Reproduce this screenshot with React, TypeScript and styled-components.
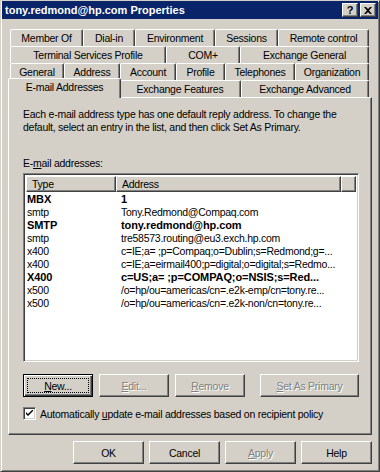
import styled, { createGlobalStyle, css } from 'styled-components';

const FACE = '#d4d0c8';
const LIGHT = '#ffffff';
const SHADOW = '#808080';
const DARK = '#404040';
const CAPTION = '#0a246a';
const FONT = `"Liberation Sans", Tahoma, Arial, sans-serif`;

const TAB_ROWS: [string, number][][] = [
  [['Member Of', 73], ['Dial-in', 52], ['Environment', 80], ['Sessions', 63], ['Remote control', 91]],
  [['Terminal Services Profile', 156], ['COM+', 74], ['Exchange General', 129]],
  [['General', 54], ['Address', 56], ['Account', 56], ['Profile', 49], ['Telephones', 70], ['Organization', 74]],
  [['E-mail Addresses', 109], ['Exchange Features', 122], ['Exchange Advanced', 128]],
];

const ADDRESSES = [
  { type: 'MBX', address: '1', primary: true },
  { type: 'smtp', address: 'Tony.Redmond@Compaq.com' },
  { type: 'SMTP', address: 'tony.redmond@hp.com', primary: true },
  { type: 'smtp', address: 'tre58573.routing@eu3.exch.hp.com' },
  { type: 'x400', address: 'c=IE;a= ;p=Compaq;o=Dublin;s=Redmond;g=...' },
  { type: 'x400', address: 'c=IE;a=eirmail400;p=digital;o=digital;s=Redmo...' },
  { type: 'X400', address: 'c=US;a= ;p=COMPAQ;o=NSIS;s=Red...', primary: true },
  { type: 'x500', address: '/o=hp/ou=americas/cn=.e2k-emp/cn=tony.re...' },
  { type: 'x500', address: '/o=hp/ou=americas/cn=.e2k-non/cn=tony.re...' },
];

const ACTIVE_TAB = 'E-mail Addresses';

export default function App() {
  return (
    <>
      <GlobalStyle />
      <Window>
        <TitleBar>
          <Title>tony.redmond@hp.com Properties</Title>
          <CaptionButton>?</CaptionButton>
          <CaptionButton $gap>
            <svg width="8" height="7" viewBox="0 0 8 7">
              <path d="M0 0h2l2 2 2-2h2L5 3.5 8 7H6L4 5 2 7H0l3-3.5z" fill="#000" />
            </svg>
          </CaptionButton>
        </TitleBar>

        <Body>
          <TabStrip>
            {TAB_ROWS.map((row, i) => (
              <TabRow key={i}>
                {row.map(([label, width]) => (
                  <Tab key={label} $w={width} $active={label === ACTIVE_TAB}>
                    {label}
                  </Tab>
                ))}
              </TabRow>
            ))}
          </TabStrip>

          <Panel>
            <Description>
              Each e-mail address type has one default reply address. To change the
              <br />
              default, select an entry in the list, and then click Set As Primary.
            </Description>

            <FieldLabel>
              E-<u>m</u>ail addresses:
            </FieldLabel>

            <ListBox>
              <ListHeader>
                <HeaderCell>Type</HeaderCell>
                <HeaderCell>Address</HeaderCell>
                <HeaderCell />
              </ListHeader>
              <ListRows>
                {ADDRESSES.map((a, i) => (
                  <ListRow key={i} $bold={a.primary}>
                    <span>{a.type}</span>
                    <span>{a.address}</span>
                  </ListRow>
                ))}
              </ListRows>
            </ListBox>

            <ButtonRow>
              <Button $w={70} $default>
                <FocusRect>
                  <span>
                    <u>N</u>ew...
                  </span>
                </FocusRect>
              </Button>
              <Button $w={70} disabled>
                <span>
                  <u>E</u>dit...
                </span>
              </Button>
              <Button $w={70} disabled>
                <span>
                  <u>R</u>emove
                </span>
              </Button>
              <Button $w={99} disabled $push>
                <span>
                  <u>S</u>et As Primary
                </span>
              </Button>
            </ButtonRow>

            <CheckRow>
              <CheckBox>
                <svg width="7" height="7" viewBox="0 0 7 7">
                  <path d="M0 2l2 2 5-5v2L2 6 0 4z" fill="#000" />
                </svg>
              </CheckBox>
              <span>
                Automatically <u>u</u>pdate e-mail addresses based on recipient policy
              </span>
            </CheckRow>
          </Panel>

          <Footer>
            <Button $w={71}>OK</Button>
            <Button $w={71}>Cancel</Button>
            <Button $w={71} disabled>
              <span>
                <u>A</u>pply
              </span>
            </Button>
            <Button $w={71}>Help</Button>
          </Footer>
        </Body>
      </Window>
    </>
  );
}

const GlobalStyle = createGlobalStyle`
  html, body { margin: 0; padding: 0; background: ${FACE}; }
  body { font: 10.5px ${FONT}; letter-spacing: -0.25px; color: #000; }
  * { box-sizing: border-box; }
`;

const raisedEdge = css`
  border: 1px solid;
  border-color: ${LIGHT} ${DARK} ${DARK} ${LIGHT};
  box-shadow: inset -1px -1px 0 ${SHADOW};
`;

const sunkenEdge = css`
  border: 1px solid;
  border-color: ${SHADOW} ${LIGHT} ${LIGHT} ${SHADOW};
  box-shadow: inset 1px 1px 0 ${DARK}, inset -1px -1px 0 ${FACE};
`;

const Window = styled.div`
  width: 380px;
  height: 472px;
  background: ${FACE};
  border: 1px solid;
  border-color: ${FACE} ${DARK} ${DARK} ${FACE};
  box-shadow: inset 1px 1px 0 ${LIGHT}, inset -1px -1px 0 ${SHADOW};
  padding: 0 1px;
  display: flex;
  flex-direction: column;
`;

const TitleBar = styled.div`
  height: 18px;
  background: ${CAPTION};
  display: flex;
  align-items: center;
  padding: 0 2px 0 3px;
`;

const Title = styled.div`
  flex: 1;
  color: #fff;
  font-weight: bold;
  font-size: 11px;
  letter-spacing: 0;
`;

const CaptionButton = styled.div<{ $gap?: boolean }>`
  ${raisedEdge};
  width: 16px;
  height: 14px;
  background: ${FACE};
  margin-left: ${(p) => (p.$gap ? '2px' : '0')};
  display: flex;
  align-items: center;
  justify-content: center;
  font-weight: bold;
  font-size: 11px;
  letter-spacing: 0;
  line-height: 1;
`;

const Body = styled.div`
  padding: 10px 6px 0;
`;

const TabStrip = styled.div`
  margin: 0 2px;
  display: flex;
  flex-direction: column;
`;

const TabRow = styled.div`
  display: flex;
  height: 17px;
`;

const Tab = styled.div<{ $w: number; $active?: boolean }>`
  width: ${(p) => p.$w}px;
  height: 17px;
  flex: none;
  background: ${FACE};
  border: 1px solid;
  border-bottom: none;
  border-color: ${LIGHT} ${DARK} transparent ${LIGHT};
  border-radius: 2px 2px 0 0;
  box-shadow: inset -1px 0 0 ${SHADOW};
  display: flex;
  align-items: center;
  justify-content: center;
  white-space: nowrap;
  position: relative;

  ${(p) =>
    p.$active &&
    css`
      width: ${p.$w + 4}px;
      height: 20px;
      margin: -2px -2px -1px;
      padding-bottom: 3px;
      z-index: 1;
    `}
`;

const Panel = styled.div`
  height: 338px;
  ${raisedEdge};
  padding: 10px 12px 0 14px;
  display: flex;
  flex-direction: column;
`;

const Description = styled.div`
  line-height: 13px;
  white-space: nowrap;
`;

const FieldLabel = styled.div`
  margin-top: 23px;
  line-height: 13px;
`;

const ListBox = styled.div`
  margin-top: 3px;
  height: 189px;
  ${sunkenEdge};
  background: #fff;
  padding: 2px;
  display: flex;
  flex-direction: column;
`;

const ListHeader = styled.div`
  display: grid;
  grid-template-columns: 90px 225px 1fr;
  height: 16px;
  flex: none;
`;

const HeaderCell = styled.div`
  ${raisedEdge};
  background: ${FACE};
  padding-left: 5px;
  line-height: 14px;
  white-space: nowrap;
`;

const ListRows = styled.div`
  padding-top: 1px;
`;

const ListRow = styled.div<{ $bold?: boolean }>`
  display: grid;
  grid-template-columns: 94px 1fr;
  padding-left: 1px;
  height: 13px;
  line-height: 13px;
  white-space: nowrap;
  font-weight: ${(p) => (p.$bold ? 'bold' : 'normal')};
  font-size: ${(p) => (p.$bold ? '11px' : '10.5px')};
  letter-spacing: ${(p) => (p.$bold ? '-0.1px' : '-0.25px')};
`;

const ButtonRow = styled.div`
  margin-top: 12px;
  display: flex;
  gap: 6px;
`;

const Button = styled.button<{ $w: number; $default?: boolean; $push?: boolean }>`
  width: ${(p) => p.$w}px;
  height: 23px;
  padding: 0;
  margin-left: ${(p) => (p.$push ? 'auto' : '0')};
  font: 10.5px ${FONT};
  letter-spacing: -0.25px;
  color: #000;
  background: ${FACE};
  ${raisedEdge};
  display: flex;
  justify-content: center;
  align-items: center;
  white-space: nowrap;

  ${(p) =>
    p.$default &&
    css`
      border: 1px solid #000;
      box-shadow: inset 1px 1px 0 ${LIGHT}, inset -1px -1px 0 ${DARK}, inset -2px -2px 0 ${SHADOW};
      align-items: stretch;
    `}

  &:disabled {
    color: ${SHADOW};
    text-shadow: 1px 1px 0 ${LIGHT};
  }
`;

const FocusRect = styled.span`
  flex: 1;
  margin: 3px;
  border: 1px dotted #000;
  display: flex;
  align-items: center;
  justify-content: center;
`;

const CheckRow = styled.label`
  margin-top: 10px;
  display: flex;
  align-items: center;
  gap: 4px;
  height: 13px;
  white-space: nowrap;
`;

const CheckBox = styled.span`
  width: 13px;
  height: 13px;
  flex: none;
  ${sunkenEdge};
  background: #fff;
  display: flex;
  align-items: center;
  justify-content: center;
`;

const Footer = styled.div`
  margin-top: 6px;
  display: flex;
  justify-content: flex-end;
  gap: 5px;
`;
